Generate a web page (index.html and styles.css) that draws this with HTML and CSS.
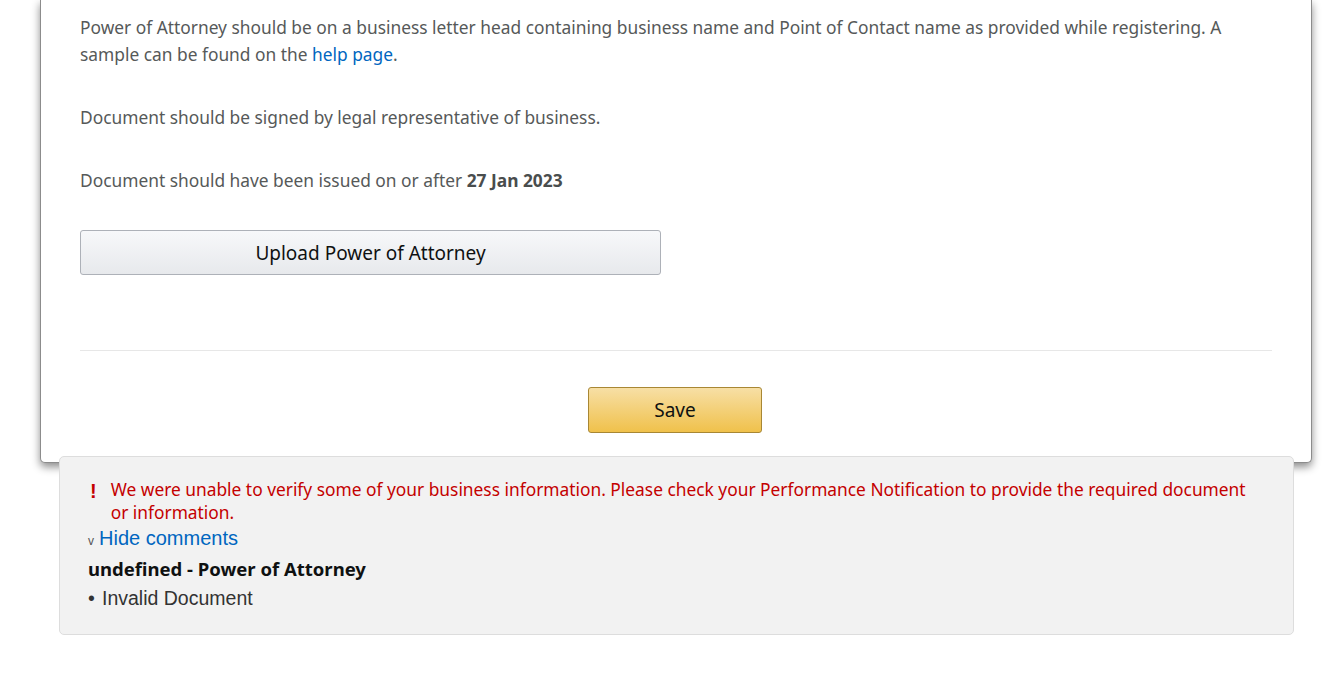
FILE: index.html
```html
<!DOCTYPE html>
<html lang="en">
<head>
    <meta charset="UTF-8">
    <meta name="viewport" content="width=device-width, initial-scale=1.0">
    <title>Power of Attorney</title>
    <link rel="stylesheet" href="styles.css">
</head>
<body>
    <div class="page">
        <div class="doc-card">
            <p class="doc-note">
                Power of Attorney should be on a business letter head containing business name and Point of Contact name as provided while registering. A sample can be found on the <a href="#" class="link">help page</a>.
            </p>
            <p class="doc-note">Document should be signed by legal representative of business.</p>
            <p class="doc-note">Document should have been issued on or after <b>27 Jan 2023</b></p>

            <button class="upload-btn">Upload Power of Attorney</button>

            <hr class="divider">

            <div class="save-row">
                <button class="save-btn">Save</button>
            </div>
        </div>

        <div class="comments-box">
            <div class="alert-line">
                <span class="alert-icon">!</span>
                <span class="alert-text">We were unable to verify some of your business information. Please check your Performance Notification to provide the required document or information.</span>
            </div>
            <div class="toggle-line">
                <span class="caret">v</span>
                <a href="#" class="toggle-link">Hide comments</a>
            </div>
            <h4 class="comment-title">undefined - Power of Attorney</h4>
            <ul class="comment-list">
                <li>Invalid Document</li>
            </ul>
        </div>
    </div>
</body>
</html>
```

FILE: styles.css
```css
* {
    margin: 0;
    padding: 0;
    box-sizing: border-box;
}

body {
    font-family: 'Noto Sans', 'Open Sans', sans-serif;
    background: #fff;
    color: #0f1111;
}

.page {
    width: 1272px;
    margin-left: 40px;
}

/* 카드 (위쪽은 화면 밖으로 이어짐) */
.doc-card {
    background: #fff;
    border: 1px solid #8c8c8c;
    border-top: none;
    border-radius: 0 0 5px 5px;
    box-shadow: 0 4px 8px rgba(0, 0, 0, 0.45);
    padding: 14px 39px 29px 39px;
}

.doc-note {
    font-size: 17.35px;
    line-height: 27px;
    color: #565959;
    margin-bottom: 36px;
}

.doc-note b {
    color: #494d4d;
}

.link {
    color: #0066c0;
    text-decoration: none;
}

.upload-btn {
    display: block;
    width: 581px;
    height: 45px;
    margin-top: 3px;
    font-family: 'Noto Sans', sans-serif;
    font-size: 19px;
    color: #0f1111;
    background: linear-gradient(to bottom, #f7f8fa, #e7e9ec);
    border: 1px solid #adb1b8;
    border-radius: 3px;
    cursor: pointer;
}

.divider {
    border: none;
    border-top: 1px solid #e7e7e7;
    margin-top: 75px;
}

.save-row {
    display: flex;
    justify-content: center;
    margin-top: 36px;
    padding-right: 2px;
}

.save-btn {
    width: 174px;
    height: 46px;
    font-family: 'Noto Sans', sans-serif;
    font-size: 19px;
    color: #0f1111;
    background: linear-gradient(to bottom, #f7dfa5, #f0c14b);
    border: 1px solid #a88734;
    border-radius: 3px;
    cursor: pointer;
}

/* 코멘트 박스 */
.comments-box {
    position: relative;
    margin: -7px 18px 0 19px;
    background: #f2f2f2;
    border: 1px solid #dddddd;
    border-radius: 5px;
    padding: 21px 28px 24px 28px;
}

.alert-line {
    display: flex;
    gap: 14px;
    padding-left: 2px;
}

.alert-icon {
    color: #c40000;
    font-family: 'Liberation Sans', sans-serif;
    font-weight: bold;
    font-size: 20px;
    line-height: 23px;
    padding-top: 2px;
}

.alert-text {
    color: #c40000;
    font-size: 17.35px;
    line-height: 23px;
}

.toggle-line {
    display: flex;
    align-items: baseline;
    gap: 5px;
    margin-top: 2px;
}

.caret {
    font-family: 'Liberation Sans', sans-serif;
    font-size: 12px;
    color: #555;
}

.toggle-link {
    font-family: 'Liberation Sans', sans-serif;
    font-size: 20px;
    line-height: 24px;
    color: #0066c0;
    text-decoration: none;
}

.comment-title {
    font-size: 18.5px;
    line-height: 26px;
    font-weight: bold;
    color: #0f1111;
    margin-top: 6px;
}

.comment-list {
    list-style: none;
    margin-top: 4px;
}

.comment-list li {
    font-family: 'Liberation Sans', sans-serif;
    font-size: 19.5px;
    line-height: 24px;
    color: #333;
    padding-left: 14px;
    position: relative;
}

.comment-list li:before {
    content: "•";
    position: absolute;
    left: 0;
}
```
